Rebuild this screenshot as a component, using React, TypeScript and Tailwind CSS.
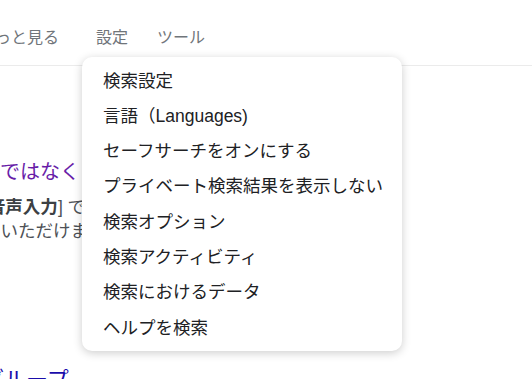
import React from "react";

const menuItems = [
  "検索設定",
  "言語（Languages)",
  "セーフサーチをオンにする",
  "プライベート検索結果を表示しない",
  "検索オプション",
  "検索アクティビティ",
  "検索におけるデータ",
  "ヘルプを検索",
];

export default function App() {
  return (
    <div
      className="relative w-[532px] h-[379px] overflow-hidden bg-white"
      style={{ fontFamily: '"Liberation Sans", Arial, "Noto Sans CJK JP", sans-serif' }}
    >
      {/* Top nav (cut at the left edge) */}
      <div className="flex h-[66px] items-start border-b border-[#ebebeb] pt-[27px] text-[16px] leading-[22px] text-[#70757a] whitespace-nowrap">
        <span className="ml-[-21px]">もっと見る</span>
        <span className="ml-[37px]">設定</span>
        <span className="ml-[29px]">ツール</span>
      </div>

      {/* Search result, mostly hidden behind the menu */}
      <div className="flex w-[82px] flex-col overflow-hidden whitespace-nowrap">
        <p className="ml-[-100px] mt-[92px] text-[20px] leading-[28px] text-[#681da8]">
          キーボードではなく
        </p>
        <p className="ml-[-17px] mt-[9px] text-[17.5px] leading-[24px] text-[#4d5156]">
          [<b className="font-bold text-[#3c4043]">音声入力</b>] で
        </p>
        <p className="ml-[-52px] text-[17.5px] leading-[24px] text-[#4d5156]">
          ご利用いただけます
        </p>
        <p className="ml-[-18px] mt-[122px] text-[22px] leading-[30px] text-[#1a0dab]">
          グループ
        </p>
      </div>

      {/* Settings dropdown */}
      <div className="absolute left-[82px] top-[57px] w-[320px] rounded-[10px] bg-white py-[6px] shadow-[0_2px_10px_rgba(0,0,0,0.2)]">
        {menuItems.map((item) => (
          <div
            key={item}
            className="flex h-[35.3px] items-center px-[21px] text-[17.5px] text-[#202124] whitespace-nowrap"
          >
            {item}
          </div>
        ))}
      </div>
    </div>
  );
}
